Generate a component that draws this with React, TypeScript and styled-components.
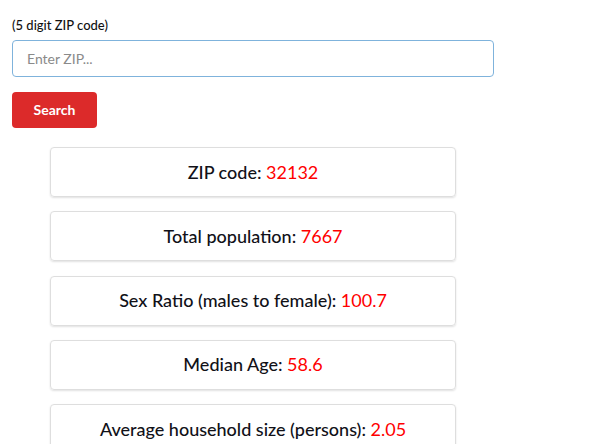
import React from "react";
import styled, { createGlobalStyle } from "styled-components";

const Global = createGlobalStyle`
  html, body { margin: 0; padding: 0; background: #fff; }
  body { font-family: Lato, "Open Sans", sans-serif; color: #111; }
  * { box-sizing: border-box; }
`;

const Page = styled.div`
  width: 482px;
  margin-left: 12px;
  padding-top: 17px;
  display: flex;
  flex-direction: column;
`;

const Label = styled.label`
  font-size: 13px;
  line-height: 16px;
  font-weight: 500;
  color: #111;
  margin-bottom: 7px;
`;

const Input = styled.input`
  height: 37px;
  width: 100%;
  border: 1px solid #7fb3dc;
  border-radius: 4px;
  padding: 0 14px;
  font-family: Lato, sans-serif;
  font-size: 14px;
  color: #333;
  outline: none;
  &::placeholder { color: #8a8a8a; }
`;

const Button = styled.button`
  margin-top: 15px;
  align-self: flex-start;
  width: 85px;
  height: 36px;
  padding: 0 0 1px;
  background: #dc2a2a;
  color: #fff;
  border: none;
  border-radius: 4px;
  font-family: Lato, sans-serif;
  font-weight: 700;
  font-size: 14px;
  cursor: pointer;
`;

const Cards = styled.div`
  margin: 19px 38px 0 38px;
  display: flex;
  flex-direction: column;
  gap: 14.25px;
`;

const Card = styled.div`
  height: 50px;
  padding-bottom: 1px;
  border: 1px solid #dedede;
  border-radius: 4px;
  box-shadow: 0 1px 2px rgba(0, 0, 0, 0.12);
  display: flex;
  align-items: center;
  justify-content: center;
  font-size: 18px;
  font-weight: 500;
  color: #111118;
`;

const Value = styled.span`
  color: #ff0000;
  font-weight: 400;
`;

const stats: [string, string][] = [
  ["ZIP code", "32132"],
  ["Total population", "7667"],
  ["Sex Ratio (males to female)", "100.7"],
  ["Median Age", "58.6"],
  ["Average household size (persons)", "2.05"],
];

export default function App() {
  return (
    <>
      <Global />
      <Page>
        <Label>(5 digit ZIP code)</Label>
        <Input placeholder="Enter ZIP..." />
        <Button>Search</Button>
        <Cards>
          {stats.map(([k, v]) => (
            <Card key={k}>
              <span>
                {k}:&nbsp;<Value>{v}</Value>
              </span>
            </Card>
          ))}
        </Cards>
      </Page>
    </>
  );
}
